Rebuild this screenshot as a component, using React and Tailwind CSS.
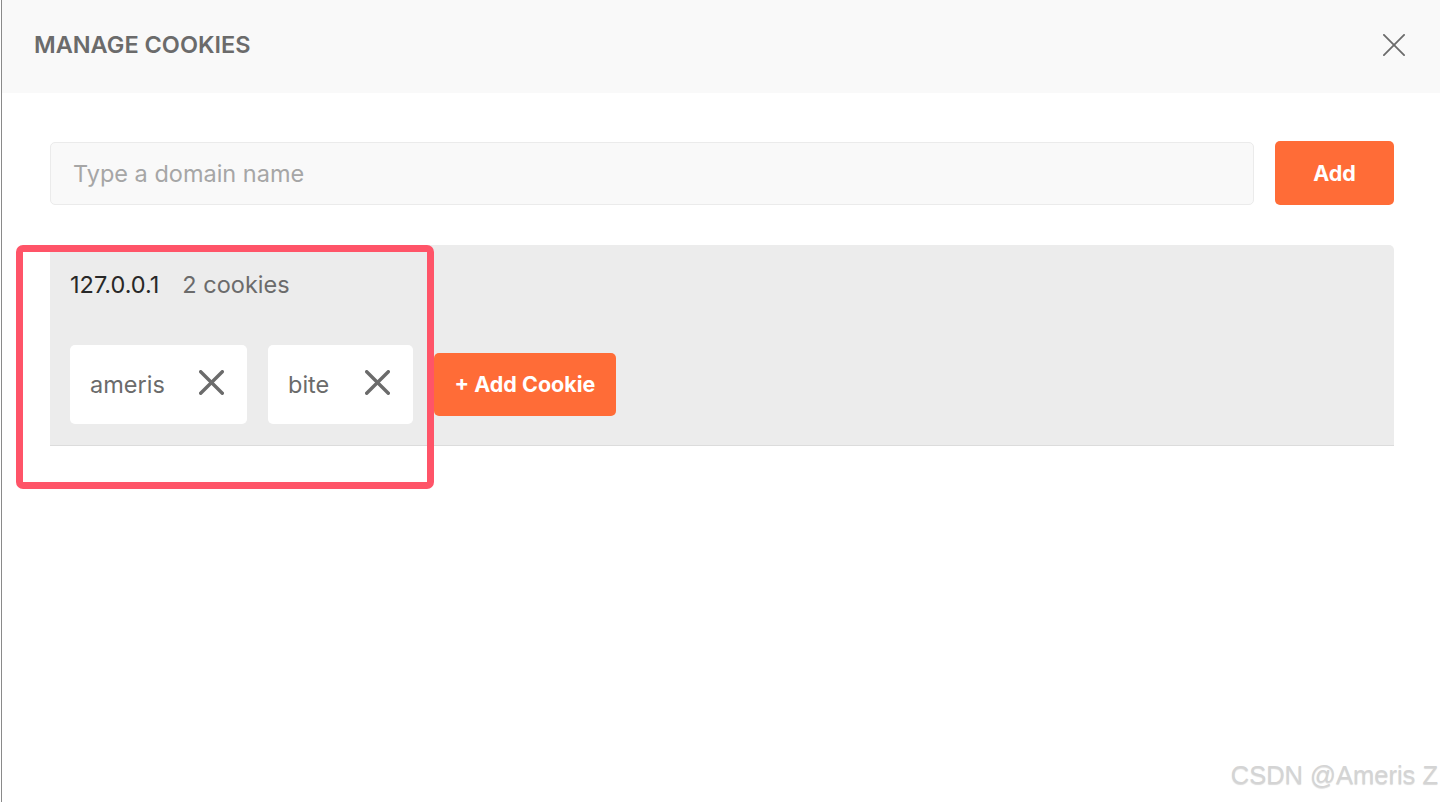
function Cross({ size, stroke, className }) {
  return (
    <svg width={size} height={size} viewBox={`0 0 ${size} ${size}`} className={className} fill="none" stroke="currentColor" strokeWidth={stroke} strokeLinecap="round">
      <line x1={stroke / 2} y1={stroke / 2} x2={size - stroke / 2} y2={size - stroke / 2} />
      <line x1={size - stroke / 2} y1={stroke / 2} x2={stroke / 2} y2={size - stroke / 2} />
    </svg>
  )
}

function CookieChip({ name, width }) {
  return (
    <div className={`flex h-[79px] items-center justify-between rounded-[5px] bg-white pl-[20px] pr-[23px] ${width}`}>
      <span className="text-[23.5px] text-[#6b6b6b]">{name}</span>
      <Cross size={25} stroke={3.4} className="mb-[4px] text-[#6b6b6b]" />
    </div>
  )
}

export default function App() {
  return (
    <div className="relative ml-px h-[802px] w-[1439px] overflow-hidden border-l border-[#8a8a8a] bg-white font-['Inter',sans-serif]">
      <div className="flex h-[93px] items-center justify-between bg-[#f9f9f9] pb-[4px] pl-[32px] pr-[35px]">
        <h2 className="text-[23.5px] font-semibold text-[#6b6b6b]">MANAGE COOKIES</h2>
        <Cross size={22} stroke={1.8} className="text-[#6b6b6b]" />
      </div>

      <div className="pl-[48px] pr-[46px] pt-[48px]">
        <div className="flex items-center gap-[21px]">
          <input
            className="h-[63px] flex-1 rounded-[5px] border border-[#ebebeb] bg-[#f9f9f9] px-[22px] text-[23.5px] text-[#282828] outline-none placeholder:text-[#a6a6a6]"
            placeholder="Type a domain name"
          />
          <button className="h-[64px] w-[119px] rounded-[5px] bg-[#ff6c37] text-[21.5px] font-bold text-white">
            Add
          </button>
        </div>

        <div className="mt-[40px] rounded-tr-[5px] border-b border-[#dcdcdc] bg-[#ececec] px-[20px] pb-[21px] pt-[26px]">
          <div className="flex h-[28px] items-center gap-[23px] text-[23.5px]">
            <span className="text-[#282828]">127.0.0.1</span>
            <span className="text-[#6b6b6b]">2 cookies</span>
          </div>
          <div className="mt-[46px] flex items-center gap-[21px]">
            <CookieChip name="ameris" width="w-[177px]" />
            <CookieChip name="bite" width="w-[145px]" />
            <button className="h-[63px] w-[182px] rounded-[5px] bg-[#ff6c37] text-[21.5px] font-bold text-white">
              + Add Cookie
            </button>
          </div>
        </div>
      </div>

      <div className="absolute left-[14px] top-[245px] h-[244px] w-[418px] rounded-[7px] border-[7px] border-[#ff5468]" />

      <div className="absolute bottom-[8px] right-[2px] font-['Liberation_Sans',sans-serif] text-[25.5px] text-[#d4d4d4] [text-shadow:0_1px_1px_rgba(0,0,0,0.15)]">
        CSDN @Ameris Z
      </div>
    </div>
  )
}
